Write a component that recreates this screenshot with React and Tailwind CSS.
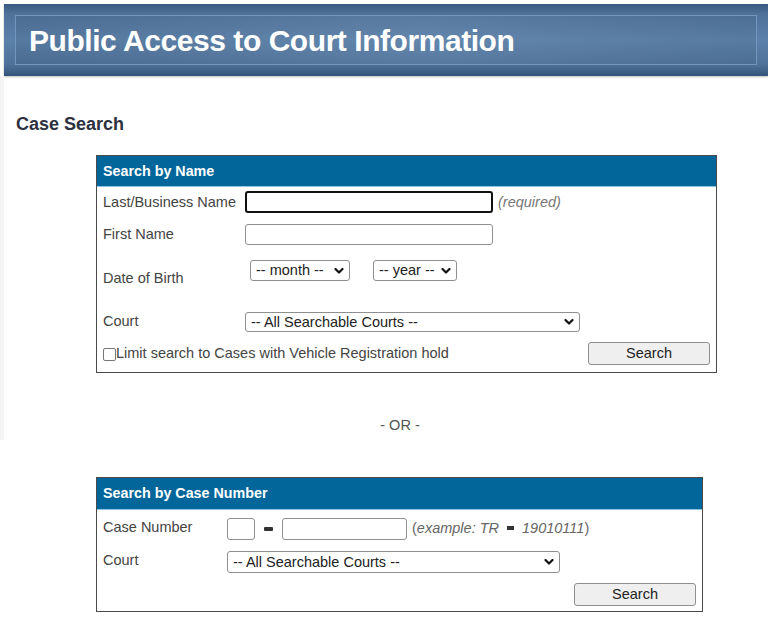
import React from 'react';

const Chevron = () => (
    <svg className="absolute right-[6px] top-1/2 -translate-y-1/2 pointer-events-none" width="10" height="7" viewBox="0 0 10 7">
        <polyline points="1.5,1.5 5,5 8.5,1.5" fill="none" stroke="#111" strokeWidth="2.2" strokeLinecap="round" strokeLinejoin="round" />
    </svg>
);

const Select = ({ label, className }) => (
    <div className={`relative ${className}`}>
        <select className="appearance-none w-full h-full border border-[#8f8f8f] rounded-[3px] bg-white pl-[5px] text-[14.5px] text-[#222] leading-none outline-none">
            <option>{label}</option>
        </select>
        <Chevron />
    </div>
);

const SearchButton = ({ className }) => (
    <button className={`w-[122px] h-[23px] bg-[#efefef] border border-[#8f8f8f] rounded-[3px] text-[14.5px] text-[#222] leading-none ${className}`}>
        Search
    </button>
);

const BoxHeader = ({ title, h }) => (
    <div className={`bg-[#03669b] ${h} flex items-center px-[6px] border-b border-[#8fc4e0]`}>
        <span className="text-white font-bold text-[14.3px] mt-[1px]">{title}</span>
    </div>
);

export default function App() {
    return (
        <div className="min-h-[640px] bg-white text-[#444] text-[14.5px] font-['Liberation_Sans',Arial,sans-serif]">
            {/* Banner */}
            <div className="pt-[4px] pl-[4px]">
                <div className="h-[72px] p-[11px] bg-[linear-gradient(180deg,#39597f_0%,#4f729b_14%,#5b80a9_50%,#4f729a_84%,#34537a_100%)] shadow-[0_1px_2px_rgba(0,0,0,0.25)]">
                    <div className="h-full flex items-center pl-[13px] border border-[#7396bd] bg-[linear-gradient(90deg,rgba(0,0,0,0.06)_0%,rgba(255,255,255,0.05)_55%,rgba(0,0,0,0.04)_100%)]">
                        <h1 className="text-white font-bold text-[30px] leading-none tracking-[-0.45px] mt-[1px]">Public Access to Court Information</h1>
                    </div>
                </div>
            </div>

            <div className="border-l-4 border-[#f4f4f4] h-[364px] pt-[37px]">
                <h2 className="ml-[12px] text-[18px] leading-[22px] font-bold text-[#2c3040]">Case Search</h2>

                {/* Search by Name */}
                <div className="mt-[20px] ml-[92px] w-[621px] border border-[#4a4a4a]">
                    <BoxHeader title="Search by Name" h="h-[31px]" />
                    <div className="px-[6px] pb-[7px]">
                        <div className="flex items-center mt-[4px] h-[22px]">
                            <span className="w-[142px] mt-[2px]">Last/Business Name</span>
                            <input className="w-[248px] h-[22px] border-2 border-[#111] rounded-[3px] outline-none" />
                            <span className="ml-[5px] mt-[2px] italic text-[#777]">(required)</span>
                        </div>
                        <div className="flex items-center mt-[11px] h-[21px]">
                            <span className="w-[142px]">First Name</span>
                            <input className="w-[248px] h-[21px] border border-[#8f8f8f] rounded-[3px] outline-none" />
                        </div>
                        <div className="flex items-start mt-[15px] h-[25px]">
                            <span className="w-[147px] leading-[16px] mt-[10px]">Date of Birth</span>
                            <Select label="-- month --" className="w-[100px] h-[21px]" />
                            <Select label="-- year --" className="w-[84px] h-[21px] ml-[23px]" />
                        </div>
                        <div className="flex items-center mt-[27px] h-[20px]">
                            <span className="w-[142px]">Court</span>
                            <Select label="-- All Searchable Courts --" className="w-[335px] h-[20px]" />
                        </div>
                        <div className="flex items-center justify-between mt-[10px] h-[23px]">
                            <label className="flex items-center mt-[1px]">
                                <span className="w-[13px] h-[13px] border border-[#777] rounded-[2px] bg-white" />
                                Limit search to Cases with Vehicle Registration hold
                            </label>
                            <SearchButton />
                        </div>
                    </div>
                </div>

                <div className="mt-[44px] ml-[92px] w-[608px] text-center leading-[16px] text-[#555]">- OR -</div>
            </div>

            {/* Search by Case Number */}
            <div className="mt-[37px] ml-[96px] w-[607px] border border-[#4a4a4a]">
                <BoxHeader title="Search by Case Number" h="h-[32px]" />
                <div className="px-[6px] pb-[5px]">
                    <div className="flex items-center mt-[8px] h-[22px]">
                        <span className="w-[124px] -mt-[2px]">Case Number</span>
                        <input className="w-[28px] h-[22px] border border-[#8f8f8f] rounded-[3px] outline-none" />
                        <span className="mx-[9px] w-[9px] h-[4px] bg-[#333] rounded-[1px]" />
                        <input className="w-[125px] h-[22px] border border-[#8f8f8f] rounded-[3px] outline-none" />
                        <span className="ml-[5px] text-[#666]">
                            (<i>example: TR</i><span className="inline-block mx-[8px] mb-[3px] w-[7px] h-[4px] bg-[#333] align-middle" /><i>19010111</i>)
                        </span>
                    </div>
                    <div className="flex items-center mt-[11px] h-[22px]">
                        <span className="w-[124px] -mt-[2px]">Court</span>
                        <Select label="-- All Searchable Courts --" className="w-[333px] h-[22px]" />
                    </div>
                    <div className="flex justify-end mt-[10px]">
                        <SearchButton />
                    </div>
                </div>
            </div>
        </div>
    );
}
